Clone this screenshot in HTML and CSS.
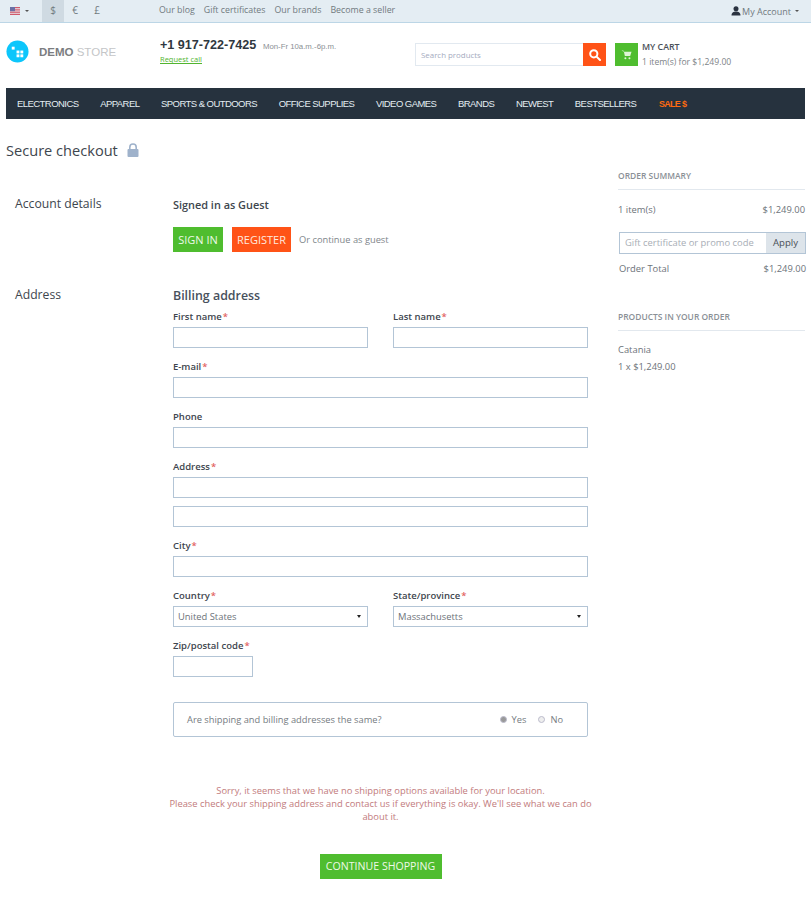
FILE: index.html
```html
<!DOCTYPE html>
<html lang="en">
<head>
    <meta charset="UTF-8">
    <title>Secure checkout</title>
    <link rel="stylesheet" href="styles.css">
</head>
<body>
    <div class="topbar">
        <div class="flag-menu">
            <svg class="flag" viewBox="0 0 10 8" width="10" height="8">
                <rect width="10" height="8" fill="#e8e0e6"/>
                <rect y="0" width="10" height="1.2" fill="#cf5a6c"/>
                <rect y="2.3" width="10" height="1.2" fill="#cf5a6c"/>
                <rect y="4.6" width="10" height="1.2" fill="#cf5a6c"/>
                <rect y="6.8" width="10" height="1.2" fill="#cf5a6c"/>
                <rect width="5" height="4.2" fill="#6a6fa4"/>
            </svg>
            <span class="caret"></span>
        </div>
        <div class="currencies">
            <a class="active">$</a>
            <a>€</a>
            <a>£</a>
        </div>
        <div class="top-links">
            <a>Our blog</a>
            <a>Gift certificates</a>
            <a>Our brands</a>
            <a>Become a seller</a>
        </div>
        <div class="account">
            <svg viewBox="0 0 10 10" width="10" height="10"><circle cx="5" cy="2.7" r="2.5" fill="#2a3340"/><path d="M0.5 9.5 C0.5 6.4 2.4 5.4 5 5.4 C7.6 5.4 9.5 6.4 9.5 9.5 Z" fill="#2a3340"/></svg>
            <span>My Account</span>
            <span class="caret"></span>
        </div>
    </div>

    <div class="page">
        <header class="header">
            <div class="logo">
                <svg viewBox="0 0 24 24" width="23" height="23">
                    <circle cx="12" cy="12" r="11.5" fill="#0cc6fb"/>
                    <rect x="6" y="7" width="3" height="3" fill="#fff"/>
                    <rect x="11" y="11" width="3" height="3" fill="#fff"/>
                    <rect x="15" y="11" width="3" height="3" fill="#fff"/>
                    <rect x="11" y="15" width="3" height="3" fill="#fff"/>
                    <rect x="15" y="15" width="3" height="3" fill="#fff"/>
                </svg>
                <div class="logo-text"><b>DEMO</b> STORE</div>
            </div>
            <div class="phone">
                <div class="phone-line"><span class="phone-number">+1 917-722-7425</span> <span class="phone-hours">Mon-Fr 10a.m.-6p.m.</span></div>
                <a class="request-call">Request call</a>
            </div>
            <div class="search">
                <div class="search-input">Search products</div>
                <div class="search-button">
                    <svg viewBox="0 0 12 12" width="12" height="12" fill="none" stroke="#fff" stroke-width="2"><circle cx="4.8" cy="4.8" r="3.6"/><path d="M7.6 7.6 L11 11" stroke-linecap="round"/></svg>
                </div>
            </div>
            <div class="cart">
                <div class="cart-icon">
                    <svg viewBox="0 0 12 12" width="11" height="11"><path d="M0.5 1.5 H2.5 L3.4 3 H11.5 L10 7.6 H4.2 L3.2 3" fill="#dff5d6"/><circle cx="4.8" cy="10" r="1.1" fill="#dff5d6"/><circle cx="9.2" cy="10" r="1.1" fill="#dff5d6"/></svg>
                </div>
                <div>
                    <div class="cart-title">MY CART</div>
                    <div class="cart-sum">1 item(s) for $1,249.00</div>
                </div>
            </div>
        </header>

        <nav class="nav">
            <a>ELECTRONICS</a>
            <a>APPAREL</a>
            <a>SPORTS &amp; OUTDOORS</a>
            <a>OFFICE SUPPLIES</a>
            <a>VIDEO GAMES</a>
            <a>BRANDS</a>
            <a>NEWEST</a>
            <a>BESTSELLERS</a>
            <a class="sale">SALE $</a>
        </nav>

        <h1 class="page-title">Secure checkout
            <svg viewBox="0 0 12 14" width="12" height="14"><path d="M2.8 6.5 V4.2 a3.2 3.2 0 0 1 6.4 0 V6.5" fill="none" stroke="#9fb2cb" stroke-width="1.6"/><rect x="0.5" y="6" width="11" height="8" rx="1" fill="#9fb2cb"/></svg>
        </h1>

        <div class="checkout">
            <main class="checkout-main">
                <section class="step step-account">
                    <h2>Account details</h2>
                    <div class="step-body">
                        <h3 class="signed-in">Signed in as Guest</h3>
                        <div class="auth-row">
                            <a class="btn btn-green">SIGN IN</a>
                            <a class="btn btn-orange">REGISTER</a>
                            <span class="auth-note">Or continue as guest</span>
                        </div>
                    </div>
                </section>

                <section class="step">
                    <h2>Address</h2>
                    <div class="step-body">
                        <h3 class="billing">Billing address</h3>
                        <div class="two-col">
                            <div class="field">
                                <label>First name<i>*</i></label>
                                <input type="text">
                            </div>
                            <div class="field">
                                <label>Last name<i>*</i></label>
                                <input type="text">
                            </div>
                        </div>
                        <div class="field">
                            <label>E-mail<i>*</i></label>
                            <input type="text">
                        </div>
                        <div class="field">
                            <label>Phone</label>
                            <input type="text">
                        </div>
                        <div class="field">
                            <label>Address<i>*</i></label>
                            <input type="text" class="address-first">
                            <input type="text">
                        </div>
                        <div class="field">
                            <label>City<i>*</i></label>
                            <input type="text">
                        </div>
                        <div class="two-col">
                            <div class="field">
                                <label>Country<i>*</i></label>
                                <div class="select">United States<span class="select-arrow"></span></div>
                            </div>
                            <div class="field">
                                <label>State/province<i>*</i></label>
                                <div class="select">Massachusetts<span class="select-arrow"></span></div>
                            </div>
                        </div>
                        <div class="field zip">
                            <label>Zip/postal code<i>*</i></label>
                            <input type="text">
                        </div>
                        <div class="same-box">
                            <span class="same-q">Are shipping and billing addresses the same?</span>
                            <span class="radio checked"></span><span class="radio-label">Yes</span>
                            <span class="radio"></span><span class="radio-label">No</span>
                        </div>
                    </div>
                </section>

                <div class="no-shipping">
                    <p>Sorry, it seems that we have no shipping options available for your location.<br>Please check your shipping address and contact us if everything is okay. We'll see what we can do about it.</p>
                    <a class="btn btn-green btn-continue">CONTINUE SHOPPING</a>
                </div>
            </main>

            <aside class="summary">
                <h4>ORDER SUMMARY</h4>
                <div class="summary-row first-row"><span>1 item(s)</span><span>$1,249.00</span></div>
                <div class="promo">
                    <div class="promo-input">Gift certificate or promo code</div>
                    <div class="promo-apply">Apply</div>
                </div>
                <div class="summary-row total-row"><span>Order Total</span><span>$1,249.00</span></div>
                <h4 class="products-head">PRODUCTS IN YOUR ORDER</h4>
                <div class="product-name">Catania</div>
                <div class="product-price">1 x $1,249.00</div>
            </aside>
        </div>
    </div>
</body>
</html>
```

FILE: styles.css
```css
* { box-sizing: border-box; }
body { margin: 0; font-family: "Open Sans", sans-serif; font-size: 10px; color: #6d737a; background-color: white; }
h1, h2, h3, h4, p { margin: 0; font-weight: normal; }

.topbar {
    display: flex; align-items: center;
    height: 23px;
    background-color: #e4edf3;
    border-bottom: 1px solid #bcd6e6;
    padding: 0 10px;
    color: #717a80;
}
.flag-menu { display: flex; align-items: center; gap: 5px; width: 32px; }
.caret { display: inline-block; border-left: 2px solid transparent; border-right: 2px solid transparent; border-top: 2px solid #555; }
.currencies { display: flex; height: 22px; }
.currencies a { width: 22px; line-height: 21px; text-align: center; }
.currencies a.active { background-color: #cfdae2; }
.top-links { display: flex; gap: 9px; margin-left: 51px; padding-bottom: 2px; font-size: 8.8px; }
.account { display: flex; align-items: center; gap: 1px; margin-left: auto; margin-right: 2px; font-size: 9px; }
.account .caret { margin-left: 3px; }

.page { padding: 0 6px; }

.header { display: flex; height: 65px; align-items: flex-start; }
.logo { display: flex; align-items: center; width: 154px; padding-top: 17px; }
.logo-text { margin-left: 10px; font-family: "Liberation Sans", sans-serif; font-size: 11.5px; color: #c4c6c8; }
.logo-text b { color: #7b7d80; }
.phone { width: 255px; padding-top: 14px; }
.phone-line { line-height: 16px; }
.phone-number { font-family: "Liberation Sans", sans-serif; font-size: 12.6px; font-weight: bold; color: #2f3740; }
.phone-hours { font-family: "Liberation Sans", sans-serif; font-size: 7.8px; color: #8b8f94; margin-left: 4px; }
.request-call { display: block; width: 42px; white-space: nowrap; font-size: 7.5px; line-height: 8px; color: #52b52f; border-bottom: 1px solid #52b52f; }
.search { display: flex; width: 191px; height: 23px; margin-top: 20px; }
.search-input { flex: 1; border: 1px solid #e2e9f0; border-right: none; padding: 0 5px; line-height: 22px; font-size: 7.9px; color: #a5abc0; }
.search-button { display: flex; align-items: center; justify-content: center; width: 23px; background-color: #ff5317; }
.cart { display: flex; gap: 4px; margin-left: 9px; margin-top: 20px; }
.cart-icon { display: flex; align-items: center; justify-content: center; width: 23px; height: 23px; background-color: #4fbd2f; }
.cart-title { font-size: 8.8px; font-weight: 600; line-height: 12px; margin-top: -2px; color: #4a5058; }
.cart-sum { font-size: 8.6px; line-height: 14px; margin-top: 2px; color: #7d8388; }

.nav { display: flex; gap: 21.6px; height: 31px; align-items: center; padding-left: 11px; background-color: #26323e; }
.nav a { font-family: "Liberation Sans", sans-serif; font-size: 9.5px; letter-spacing: -0.55px; color: #e4edf2; }
.nav a.sale { margin-left: 1px; font-size: 9px; letter-spacing: -0.7px; color: #ff6a10; font-weight: bold; }

.page-title { margin-top: 20px; font-size: 14.6px; line-height: 22px; color: #3e464e; display: flex; align-items: center; gap: 9px; }

.checkout { display: flex; gap: 18px; }
.checkout-main { width: 594px; }
.summary { width: 187px; margin-top: 9px; }

.step { display: flex; }
.step h2 { width: 158px; padding-left: 9px; font-size: 12.2px; color: #3e464e; }
.step-body { width: 415px; margin-left: 9px; }
.step-account { height: 125px; padding-top: 34px; }
.signed-in { font-size: 10.9px; font-weight: 600; line-height: 16px; margin-top: 2px; color: #3e464e; }
.auth-row { display: flex; align-items: center; margin-top: 14px; }
.btn { display: inline-block; height: 25px; line-height: 25px; text-align: center; font-size: 11px; color: #eef9e8; }
.btn-green { background-color: #4fbd2f; width: 50px; }
.btn-orange { background-color: #ff5317; width: 59px; margin-left: 9px; color: #ffe9df; }
.auth-note { margin-left: 8px; font-size: 9.3px; color: #80868b; }

.billing { font-size: 12.4px; font-weight: 600; line-height: 16px; margin-top: 2px; margin-bottom: 5px; color: #47505c; }
.two-col { display: grid; grid-template-columns: 195px 195px; gap: 25px; }
.field { margin-bottom: 11px; }
.field label { display: block; font-size: 9.5px; font-weight: 600; line-height: 15px; margin-bottom: 3px; color: #3e464e; }
.field label i { font-style: normal; color: #e2635f; margin-left: 1px; }
.field input { display: block; width: 100%; height: 21px; border: 1px solid #b3c5d6; background-color: white; }
.field input.address-first { margin-bottom: 8px; }
.zip { width: 80px; white-space: nowrap; }
.select { display: flex; align-items: center; justify-content: space-between; height: 21px; padding: 0 6px 0 4px; border: 1px solid #b3c5d6; font-size: 9.4px; color: #6d737a; }
.select-arrow { border-left: 2px solid transparent; border-right: 2px solid transparent; border-top: 3px solid #222; }

.same-box { display: flex; align-items: center; height: 35px; margin-top: 25px; padding: 0 24px 0 13px; border: 1px solid #b3c5d6; border-radius: 2px; font-size: 9.3px; color: #757b81; }
.same-q { margin-right: auto; }
.radio { width: 7px; height: 7px; border-radius: 50%; border: 1px solid #bbc; background-color: #eee; margin-right: 5px; }
.radio.checked { background-color: #999; }
.radio-label { margin-right: 12px; }
.radio-label:last-child { margin-right: 0; }

.no-shipping { width: 425px; margin-left: 162px; margin-top: 47px; text-align: center; }
.no-shipping p { font-size: 9.35px; line-height: 13px; color: #c27b7d; }
.btn-continue { width: 122px; margin-top: 31px; font-size: 10.6px; }

.summary h4 { font-size: 8.45px; font-weight: 600; line-height: 12px; padding-bottom: 7px; border-bottom: 1px solid #e2e8ee; color: #8a9096; }
.summary-row { display: flex; justify-content: space-between; font-size: 9.4px; color: #6d737a; }
.first-row { margin-top: 13px; }
.promo { display: flex; height: 22px; margin-top: 16px; margin-right: -1px; margin-left: 1px; border: 1px solid #b3c5d6; }
.promo-input { flex: 1; padding-left: 5px; line-height: 20px; font-size: 9.4px; color: #a8aeb6; }
.promo-apply { width: 39px; text-align: center; line-height: 20px; background-color: #dde4ea; font-size: 9.6px; color: #4a5058; }
.total-row { margin-top: 8px; margin-right: -1px; padding-left: 1px; }
.summary .products-head { margin-top: 36px; }
.product-name { margin-top: 12px; font-size: 9.4px; }
.product-price { margin-top: 4px; font-size: 9.4px; }
```
